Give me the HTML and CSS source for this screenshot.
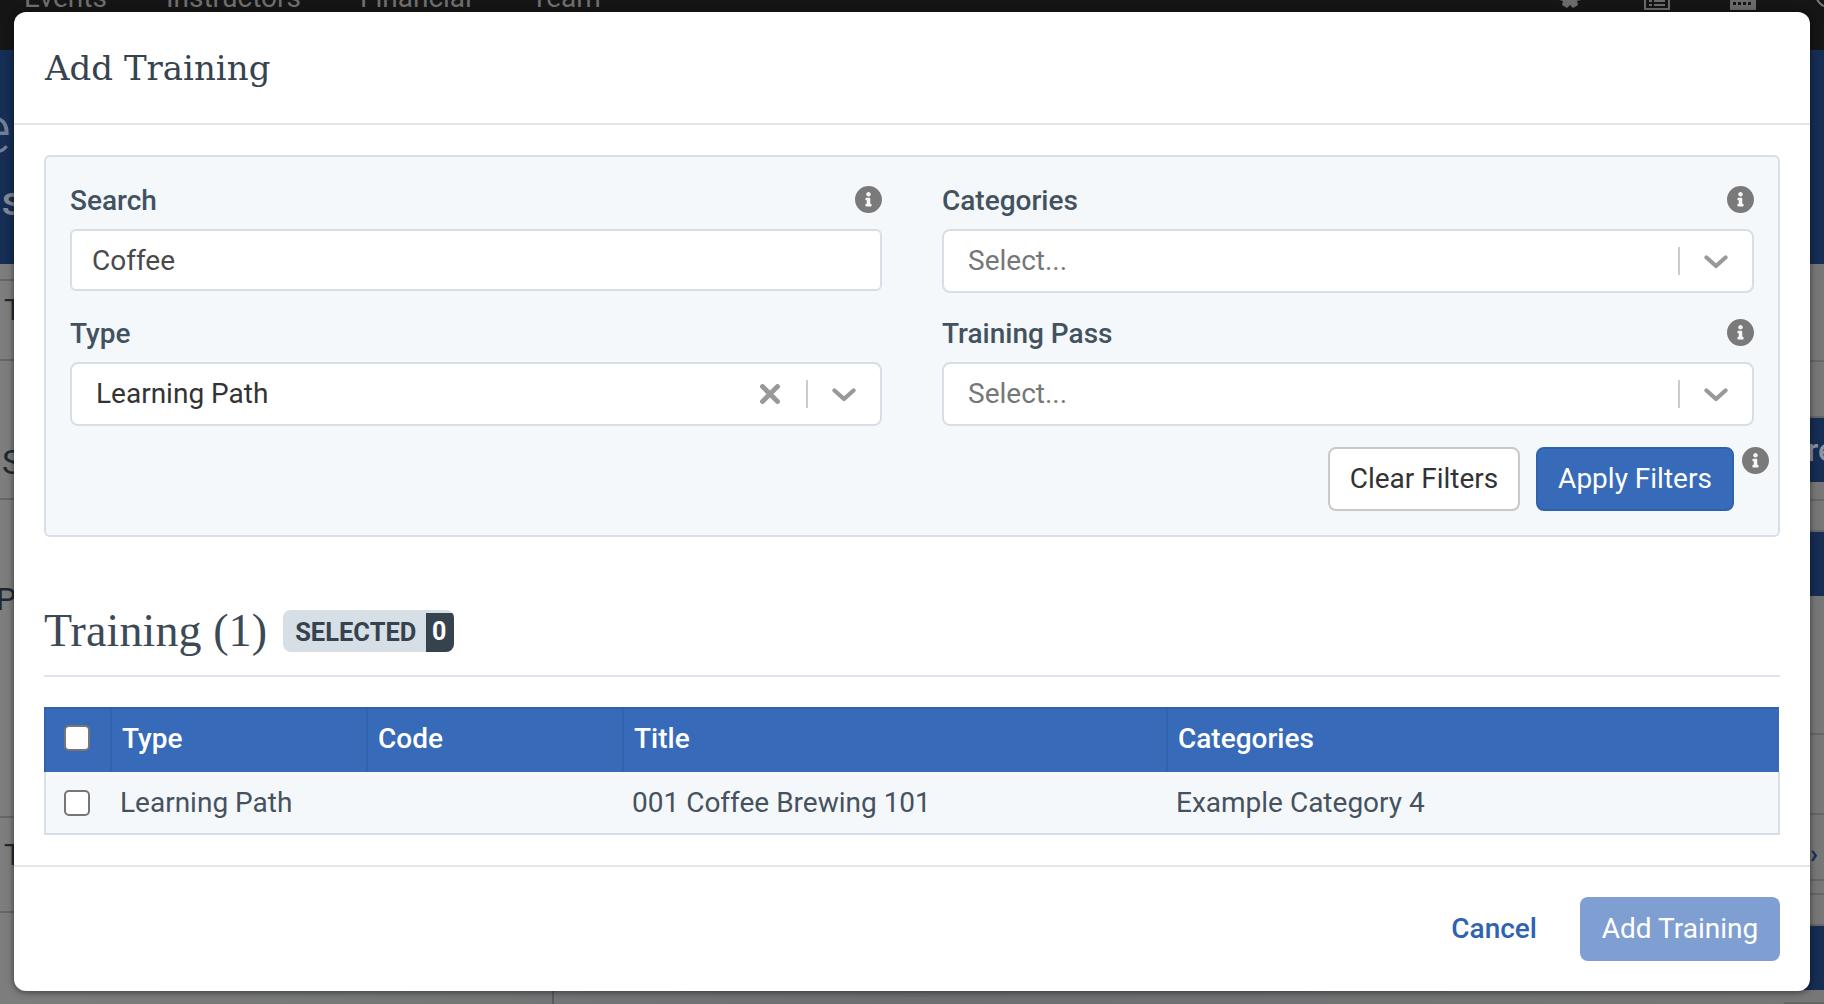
FILE: index.html
```html
<!DOCTYPE html>
<html lang="en">
<head>
<meta charset="utf-8">
<title>Add Training</title>
<link rel="stylesheet" href="styles.css">
</head>
<body>
<svg class="defs" width="0" height="0" aria-hidden="true">
  <symbol id="info" viewBox="8 8 496 496"><path fill-rule="evenodd" d="M256 8C119.043 8 8 119.083 8 256c0 136.997 111.043 248 248 248s248-111.003 248-248C504 119.083 392.957 8 256 8zm0 110c23.196 0 42 18.804 42 42s-18.804 42-42 42-42-18.804-42-42 18.804-42 42-42zm56 254c0 6.627-5.373 12-12 12h-88c-6.627 0-12-5.373-12-12v-24c0-6.627 5.373-12 12-12h12v-64h-12c-6.627 0-12-5.373-12-12v-24c0-6.627 5.373-12 12-12h64c6.627 0 12 5.373 12 12v100h12c6.627 0 12 5.373 12 12v24z"/></symbol>
  <symbol id="chev" viewBox="0 0 24 14"><path d="M2.5 2.500 12 11l9.500-8.500" fill="none" stroke="currentColor" stroke-width="4.200" stroke-linecap="round" stroke-linejoin="round"/></symbol>
  <symbol id="times" viewBox="0 0 20 20"><path d="M2.500 2.500 17.500 17.500M17.500 2.500 2.500 17.500" fill="none" stroke="currentColor" stroke-width="4.800" stroke-linecap="round"/></symbol>
</svg>

<div class="page">
  <nav class="nav">
    <span>Events</span><span>Instructors</span><span>Financial</span><span>Team</span>
    <div class="nav-icons">
      <svg class="nav-icon" viewBox="0 0 26 26"><path d="M10 0h6l1 4 4-2 4 5-3 3 1 3v3l-4 1 1 4-5 3-3-3-3 3-5-3 1-4-4-1v-6l4-1-2-4 4-4 3 2z"/></svg>
      <svg class="nav-icon" viewBox="0 0 26 26"><path fill-rule="evenodd" d="M0 0h26v26H0zM2 14v10h22V14zM5 16h3v2H5zM10 16h11v2H10zM5 20h3v2H5zM10 20h11v2H10z"/></svg>
      <svg class="nav-icon" viewBox="0 0 26 26"><path fill-rule="evenodd" d="M0 0h26v26H0zM3 12v3h3v-3zM8 12v3h3v-3zM13 12v3h3v-3zM18 12v3h3v-3zM3 18v3h3v-3zM8 18v3h3v-3zM13 18v3h3v-3zM18 18v3h3v-3z"/></svg>
      <svg class="nav-icon nav-ring" viewBox="0 0 26 26"><circle cx="13" cy="10" r="13"/></svg>
    </div>
  </nav>
  <header class="hero">
    <div class="hero-title">e</div>
    <div class="hero-sub">S</div>
  </header>
  <div class="content">
    <div class="rows-left">
      <div class="seg"></div>
      <div class="seg seg-t1">T</div>
      <div class="seg seg-s">S</div>
      <div class="seg seg-pa">Pa</div>
      <div class="seg seg-t2">T</div>
      <div class="seg seg-end"></div>
    </div>
    <div class="rows-right">
      <div class="rseg"><span class="rbox"></span></div>
      <div class="rseg"></div>
      <div class="rseg rblue">re</div>
      <div class="rseg"></div>
      <div class="rseg"></div>
      <div class="rseg rblue"></div>
      <div class="rseg"></div>
      <div class="rseg"></div>
      <div class="rseg rarrow">›</div>
      <div class="rseg"></div>
      <div class="rseg"></div>
      <div class="rseg rblue"></div>
      <div class="rseg"></div>
    </div>
  </div>
</div>

<section class="modal" role="dialog" aria-label="Add Training">
  <header class="modal-head">
    <h1 class="modal-title">Add Training</h1>
  </header>
  <div class="modal-body">
    <form class="filters">
      <div class="filter-grid">
        <div class="field">
          <div class="field-label"><label>Search</label><svg class="info"><use href="#info"/></svg></div>
          <div class="text-input">Coffee</div>
        </div>
        <div class="field">
          <div class="field-label"><label>Categories</label><svg class="info"><use href="#info"/></svg></div>
          <div class="select">
            <span class="placeholder">Select...</span>
            <span class="sep"></span>
            <svg class="chev"><use href="#chev"/></svg>
          </div>
        </div>
        <div class="field">
          <div class="field-label"><label>Type</label></div>
          <div class="select">
            <span class="value">Learning Path</span>
            <svg class="times"><use href="#times"/></svg>
            <span class="sep"></span>
            <svg class="chev"><use href="#chev"/></svg>
          </div>
        </div>
        <div class="field">
          <div class="field-label"><label>Training Pass</label><svg class="info"><use href="#info"/></svg></div>
          <div class="select">
            <span class="placeholder">Select...</span>
            <span class="sep"></span>
            <svg class="chev"><use href="#chev"/></svg>
          </div>
        </div>
      </div>
      <div class="filter-actions">
        <button type="button" class="btn btn-outline">Clear Filters</button>
        <button type="button" class="btn btn-primary">Apply Filters</button>
        <svg class="info"><use href="#info"/></svg>
      </div>
    </form>

    <div class="section-head">
      <h2 class="section-title">Training (1)</h2>
      <div class="badge"><span class="badge-label">SELECTED</span><span class="badge-count">0</span></div>
    </div>

    <table class="table">
      <colgroup>
        <col class="col-check"><col class="col-type"><col class="col-code"><col class="col-title"><col>
      </colgroup>
      <thead>
        <tr>
          <th class="cell-check"><input type="checkbox" class="check" aria-label="Select all"></th>
          <th>Type</th><th>Code</th><th>Title</th><th>Categories</th>
        </tr>
      </thead>
      <tbody>
        <tr>
          <td class="cell-check"><input type="checkbox" class="check" aria-label="Select row"></td>
          <td>Learning Path</td><td></td><td>001 Coffee Brewing 101</td><td>Example Category 4</td>
        </tr>
      </tbody>
    </table>
  </div>
  <footer class="modal-foot">
    <a class="link-cancel">Cancel</a>
    <button type="button" class="btn btn-disabled">Add Training</button>
  </footer>
</section>
</body>
</html>
```

FILE: styles.css
```css
* { box-sizing: border-box; }
html, body { margin: 0; height: 100%; overflow: hidden; }
body { font-family: Roboto, "Liberation Sans", sans-serif; background: #767676; color: #46525e; }
.defs { position: absolute; }

/* dimmed page behind the dialog */
.page { height: 1004px; display: flex; flex-direction: column; overflow: hidden; }
.nav { height: 50px; flex: none; background: #151515; color: #6e6e6e; font-size: 28px; line-height: 32px; display: flex; gap: 59px; padding-left: 24px; overflow: hidden; }
.nav > span { margin-top: -18px; height: 32px; }
.nav-icons { margin-left: auto; margin-right: -18px; margin-top: -16px; display: flex; gap: 60px; height: 26px; }
.nav-icon { width: 26px; height: 26px; fill: #6a6a6a; overflow: visible; flex: none; }
.nav-ring { fill: none; stroke: #7a7a7a; stroke-width: 2; }
.hero { height: 214px; flex: none; background: #162d54; color: #6f7e95; padding-top: 46px; overflow: hidden; }
.hero-title { font-size: 68px; font-weight: 300; line-height: 68px; margin-left: -24px; }
.hero-sub { font-size: 32px; font-weight: 700; line-height: 32px; margin-top: 24px; margin-left: 2px; color: #7f8993; }
.content { flex: 1; display: flex; justify-content: space-between; background: linear-gradient(90deg, #7d7d7d, #6d6f70 50%, #777); }
.rows-left { width: 554px; border-right: 2px solid #5a5a5a; display: grid; grid-template-rows: 17px 80px 139px 318px 95px 1fr; color: #1f2830; }
.seg { border-bottom: 2px solid #666; display: flex; align-items: flex-start; }
.seg-t1 { font-size: 30px; line-height: 36px; padding: 11px 0 0 4px; }
.seg-s { font-size: 34px; line-height: 40px; padding: 81px 0 0 2px; }
.seg-pa { font-size: 32px; line-height: 36px; padding-top: 81px; margin-left: -4px; }
.seg-t2 { font-size: 30px; line-height: 36px; padding: 19px 0 0 4px; }
.seg-end { border-bottom: 0; }
.rows-right { width: 40px; display: grid; grid-template-rows: 98px 56px 64px 19px 31px 64px 139px 80px 66px 14px 31px 64px 1fr; }
.rseg { border-bottom: 2px solid #666; position: relative; }
.rbox { position: absolute; right: 0; top: 38px; width: 4px; height: 20px; background: #15305c; }
.rblue { background: #162d54; border-bottom: 0; color: #8a94a3; font-size: 32px; font-weight: 500; line-height: 64px; padding-left: 23px; }
.rarrow { color: #15305c; font-size: 26px; font-weight: 700; line-height: 78px; padding-left: 26px; }

/* dialog */
.modal { position: absolute; left: 14px; top: 12px; width: 1796px; height: 979px; background: #fff; border-radius: 12px; box-shadow: 0 1px 7px rgba(0,0,0,.55); display: flex; flex-direction: column; }
.modal-head { height: 113px; flex: none; border-bottom: 2px solid #e3e6e9; padding: 0 31px; display: flex; align-items: center; }
.modal-title { margin: 0; font: 400 34px/44px "DejaVu Serif", "Liberation Serif", serif; color: #36434f; }
.modal-body { flex: 1; padding: 30px 30px 0; }

.filters { height: 382px; background: #f4f8fb; border: 2px solid #d6dfe8; border-radius: 6px; padding: 26px 24px 24px 24px; }
.filter-grid { display: grid; grid-template-columns: 812px 812px; column-gap: 60px; row-gap: 23px; }
.field-label { height: 46px; display: flex; align-items: flex-start; justify-content: space-between; padding-top: 3px; }
.field-label label { font-size: 28px; line-height: 30px; font-weight: 500; color: #43525f; }
.info { width: 27px; height: 27px; fill: #7a7a7a; flex: none; }
.text-input { height: 62px; background: #fff; border: 2px solid #d6dfe8; border-radius: 6px; padding-left: 20px; font-size: 28px; line-height: 60px; color: #4a4a4a; }
.select { height: 64px; background: #fff; border: 2px solid #d6dfe8; border-radius: 8px; display: flex; align-items: center; padding-left: 24px; font-size: 28px; }
.placeholder { color: #777; margin-right: auto; padding-bottom: 2px; }
.value { color: #333; margin-right: auto; padding-bottom: 2px; }
.times { width: 20px; height: 20px; color: #999; margin-right: 26px; }
.sep { width: 2px; height: 28px; background: #ccc; }
.chev { width: 24px; height: 14px; color: #999; margin: 1px 24px 0 24px; }

.filter-actions { display: flex; justify-content: flex-end; align-items: flex-start; gap: 16px; margin-top: 21px; margin-right: -15px; }
.filter-actions .info { margin-left: -8px; }
.btn { height: 64px; border-radius: 8px; font: 400 28px/1 Roboto, sans-serif; padding: 0; }
.btn-outline { width: 192px; background: #fff; border: 2px solid #c9c9c9; color: #333; }
.btn-primary { width: 198px; background: #376ab8; border: 2px solid #2f62ad; color: #fff; }
.btn-disabled { width: 200px; background: #7f9fd2; border: 0; color: #fff; }

.section-head { margin-top: 61px; height: 79px; padding-bottom: 12px; border-bottom: 2px solid #dde3ea; display: flex; align-items: center; gap: 16px; }
.section-title { margin: 0; font: 400 46px/66px "Liberation Serif", serif; color: #3d4a56; letter-spacing: .1px; }
.badge { height: 42px; width: 171px; margin-top: 1px; background: #d6dee6; border-radius: 8px; display: flex; align-items: stretch; justify-content: space-between; overflow: hidden; }
.badge-label { padding-left: 12px; font-size: 25.5px; font-weight: 700; line-height: 45px; color: #36434f; }
.badge-count { width: 28px; margin-top: 3px; padding-right: 2px; background: #36434f; color: #fff; font-size: 25px; font-weight: 700; line-height: 38px; text-align: center; }

.table { width: 1736px; margin-top: 30px; border-collapse: collapse; table-layout: fixed; }
.col-check { width: 66px; }
.col-type { width: 256px; }
.col-code { width: 256px; }
.col-title { width: 544px; }
.table th { height: 64px; padding: 0 0 4px 10px; background: #376ab8; border-top: 2px solid #2f62ad; border-left: 2px solid #3163ad; border-bottom: 0; color: #fff; font-size: 28px; font-weight: 500; text-align: left; }
.table td { height: 62px; padding: 0 0 1px 9px; background: #f4f8fb; border-bottom: 2px solid #d6dfe8; font-size: 28px; color: #46525e; }
.table td:first-child { border-left: 2px solid #d6dfe8; }
.table td:last-child { border-right: 2px solid #d6dfe8; }
.table th.cell-check { padding: 0 0 5px 18px; }
.table td.cell-check { padding: 0 0 0 18px; }
.check { appearance: none; display: block; margin: 0; width: 26px; height: 26px; background: #fff; border: 2px solid #767676; border-radius: 5px; }

.modal-foot { height: 126px; flex: none; border-top: 2px solid #e3e6e9; padding: 30px 30px 0; display: flex; justify-content: flex-end; align-items: flex-start; gap: 43px; }
.link-cancel { font-size: 28px; font-weight: 500; line-height: 64px; color: #2f62b0; }
```
